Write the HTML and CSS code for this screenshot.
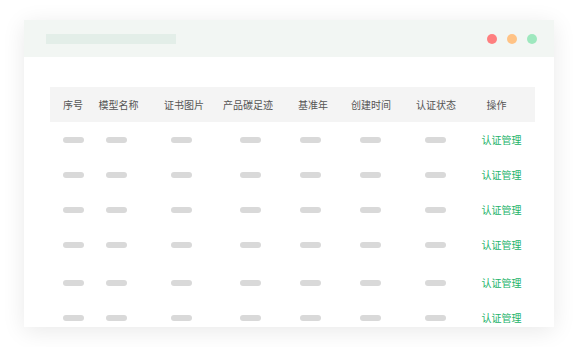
FILE: index.html
```html
<!DOCTYPE html>
<html lang="zh-CN">
<head>
    <meta charset="UTF-8">
    <meta name="viewport" content="width=device-width, initial-scale=1.0">
    <title>认证管理</title>
    <link rel="stylesheet" href="styles.css">
</head>
<body>
    <div class="window">
        <div class="titlebar">
            <div class="title-bar-placeholder"></div>
            <div class="dots">
                <span class="dot red"></span>
                <span class="dot orange"></span>
                <span class="dot green"></span>
            </div>
        </div>

        <div class="content">
            <div class="thead">
                <div class="cell">序号</div>
                <div class="cell">模型名称</div>
                <div class="cell">证书图片</div>
                <div class="cell">产品碳足迹</div>
                <div class="cell">基准年</div>
                <div class="cell">创建时间</div>
                <div class="cell">认证状态</div>
                <div class="cell">操作</div>
            </div>
            <div id="rows"></div>
        </div>
    </div>

    <script>
        // 六行占位数据
        const rows = document.getElementById('rows');
        for (let i = 0; i < 6; i++) {
            const row = document.createElement('div');
            row.className = i === 4 ? 'row row-tall' : 'row';
            let html = '';
            for (let j = 0; j < 7; j++) {
                html += '<div class="cell"><span class="pill"></span></div>';
            }
            html += '<div class="cell"><a class="link" href="#">认证管理</a></div>';
            row.innerHTML = html;
            rows.appendChild(row);
        }
    </script>
</body>
</html>
```

FILE: styles.css
```css
body {
    margin: 0;
    padding: 20px 24px;
    background: #fff;
    font-family: "Noto Sans CJK SC", "Noto Sans", sans-serif;
}

/* 窗口 */
.window {
    width: 530px;
    height: 307px;
    background: #fff;
    overflow: hidden;
    box-shadow: 0 4px 22px rgba(0, 0, 0, 0.09);
}

.titlebar {
    height: 37px;
    background: #f2f6f3;
    display: flex;
    align-items: center;
    justify-content: space-between;
    padding: 0 17px 0 22px;
}

.title-bar-placeholder {
    width: 130px;
    height: 10px;
    background: #e3eee8;
}

.dots {
    display: flex;
    gap: 10px;
}

.dot {
    width: 10px;
    height: 10px;
    border-radius: 50%;
}

.red { background: #fe7f7f; }
.orange { background: #ffc385; }
.green { background: #9ee8be; }

/* 表格 */
.content {
    padding: 30px 19px 0 26px;
}

.thead,
.row {
    display: grid;
    align-items: center;
}

.thead {
    height: 35px;
    background: #f4f4f4;
    grid-template-columns: 46px 45px 86px 42px 88px 28px 102px 19px;
    font-size: 10px;
    color: #555;
}

.row {
    height: 35px;
    grid-template-columns: 47px 39px 91px 47px 73px 47px 83px 49px;
}

.row-tall {
    margin-top: 3px;
}

.cell {
    display: flex;
    justify-content: center;
    white-space: nowrap;
}

.pill {
    width: 21px;
    height: 6px;
    border-radius: 3px;
    background: #d9d9d9;
}

.link {
    font-size: 10px;
    color: #22b36a;
    text-decoration: none;
}
```
